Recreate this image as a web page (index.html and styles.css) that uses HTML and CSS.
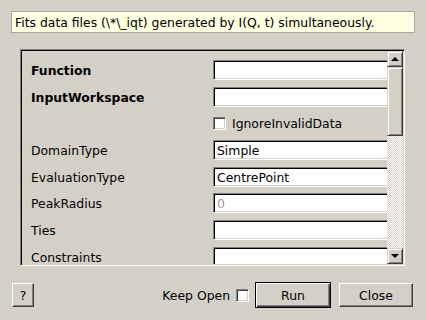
FILE: index.html
```
<!DOCTYPE html>
<html lang="en">
<head>
    <meta charset="UTF-8">
    <meta name="viewport" content="width=device-width, initial-scale=1.0">
	<link rel="stylesheet" href="styles.css">
</head>
<body>
<div class="dialog">
	<div class="description">Fits data files (\*\_iqt) generated by I(Q, t) simultaneously.</div>
	<div class="frame">
		<div class="props">
			<div class="label bold">Function</div>
			<div class="field"><div class="edit"></div></div>
			<div class="label bold">InputWorkspace</div>
			<div class="field"><div class="edit"></div></div>
			<div class="label"></div>
			<div class="field"><span class="check"></span><span class="check-text">IgnoreInvalidData</span></div>
			<div class="label">DomainType</div>
			<div class="field"><div class="edit">Simple</div></div>
			<div class="label">EvaluationType</div>
			<div class="field"><div class="edit">CentrePoint</div></div>
			<div class="label">PeakRadius</div>
			<div class="field"><div class="edit disabled">0</div></div>
			<div class="label">Ties</div>
			<div class="field"><div class="edit"></div></div>
			<div class="label">Constraints</div>
			<div class="field"><div class="edit"></div></div>
		</div>
		<div class="scrollbar">
			<div class="sb-btn"><span class="arrow up"></span></div>
			<div class="sb-thumb"></div>
			<div class="sb-trough"></div>
			<div class="sb-btn"><span class="arrow down"></span></div>
		</div>
	</div>
	<div class="footer">
		<div class="btn help">?</div>
		<div class="spacer"></div>
		<span class="keep">Keep Open</span>
		<span class="check"></span>
		<div class="btn run">Run</div>
		<div class="btn close">Close</div>
	</div>
</div>
</body>
</html>
```
FILE: styles.css
```
body{
	margin:0;
	background-color:#d4d0c8;
	font-family:"DejaVu Sans", sans-serif;
	font-size:12.4px;
	color:#000;
}
.dialog{
	width:426px;
	height:320px;
	padding-top:11px;
	box-sizing:border-box;
}
.description{
	margin:0 11px 0 11px;
	height:22px;
	box-sizing:border-box;
	border:1px solid #a8a8a0;
	background-color:#ffffe1;
	padding-left:3px;
	line-height:21px;
	white-space:nowrap;
}
.frame{
	margin:16px 21px 0 20px;
	height:217px;
	box-sizing:border-box;
	border:1px solid;
	border-color:#808080 #fff #fff #808080;
	box-shadow:inset 1px 1px #000, inset -1px -1px #d4d0c8;
	padding:1px;
	display:flex;
}
.props{
	flex:1;
	overflow:hidden;
	padding:9px 0 0 9px;
	display:grid;
	grid-template-columns:182px 1fr;
	grid-auto-rows:20px;
	row-gap:6.7px;
	align-content:start;
}
.label{
	display:flex;
	align-items:center;
	padding-top:1px;
	white-space:nowrap;
}
.bold{
	font-weight:bold;
}
.field{
	display:flex;
	align-items:center;
	white-space:nowrap;
}
.edit{
	width:200px;
	height:20px;
	flex:none;
	box-sizing:border-box;
	background-color:#fff;
	border:1px solid;
	border-color:#808080 #fff #fff #808080;
	box-shadow:inset 1px 1px #000, inset -1px -1px #d4d0c8;
	padding:0 3px;
	line-height:19px;
}
.edit.disabled{
	color:#9a9a9a;
}
.check{
	display:inline-block;
	width:13px;
	height:13px;
	flex:none;
	box-sizing:border-box;
	background-color:#fff;
	border:1px solid;
	border-color:#808080 #fff #fff #808080;
	box-shadow:inset 1px 1px #404040, inset -1px -1px #d4d0c8;
}
.check-text{
	margin-left:6px;
}
.scrollbar{
	width:16px;
	display:flex;
	flex-direction:column;
}
.sb-btn, .sb-thumb{
	box-sizing:border-box;
	background-color:#d4d0c8;
	border:1px solid;
	border-color:#d4d0c8 #404040 #404040 #d4d0c8;
	box-shadow:inset 1px 1px #fff, inset -1px -1px #808080;
}
.sb-btn{
	height:16px;
	display:flex;
	align-items:center;
	justify-content:center;
}
.sb-thumb{
	height:69px;
}
.sb-trough{
	flex:1;
	background-color:#eae8e4;
	background-image:conic-gradient(#fff 25%, #d4d0c8 0 50%, #fff 0 75%, #d4d0c8 0);
	background-size:2px 2px;
}
.arrow{
	width:0;
	height:0;
	border-left:4px solid transparent;
	border-right:4px solid transparent;
}
.arrow.up{
	border-bottom:4px solid #000;
}
.arrow.down{
	border-top:4px solid #000;
}
.footer{
	display:flex;
	align-items:center;
	margin-top:16px;
	padding:0 13px 0 12px;
	height:26px;
}
.spacer{
	flex:1;
}
.btn{
	box-sizing:border-box;
	height:24px;
	display:flex;
	align-items:center;
	justify-content:center;
	background-color:#d4d0c8;
	border:1px solid;
	border-color:#fff #404040 #404040 #fff;
	box-shadow:inset -1px -1px #808080;
}
.help{
	width:22px;
}
.keep{
	margin-right:6px;
}
.run{
	width:76px;
	height:26px;
	margin-left:6px;
	border:1px solid #000;
	box-shadow:inset 1px 1px #fff, inset -1px -1px #404040, inset -2px -2px #808080;
}
.close{
	width:74px;
	margin-left:8px;
}
```
